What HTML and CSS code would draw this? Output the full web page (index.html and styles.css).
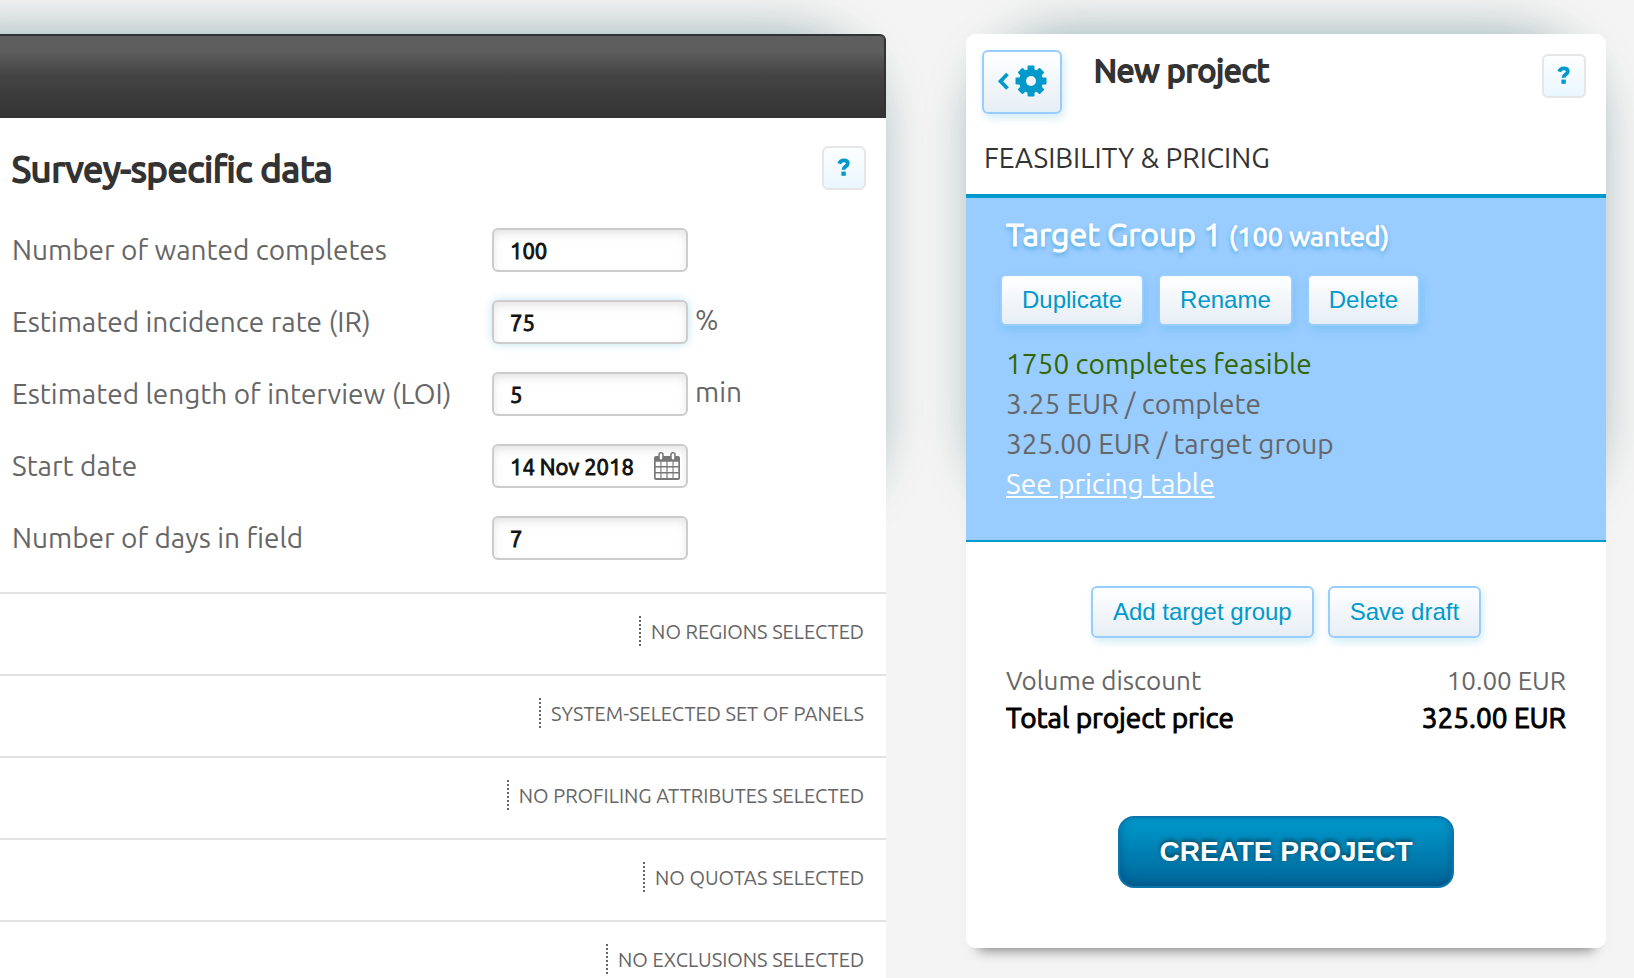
FILE: index.html
```html
<!DOCTYPE html>
<html lang="en">
<head>
<meta charset="utf-8">
<title>New project</title>
<link rel="stylesheet" href="styles.css">
</head>
<body>
<div class="page">
  <main class="card survey">
    <div class="topbar"></div>
    <form class="data">
      <div class="data-head">
        <h1 class="data-title">Survey-specific data</h1>
        <button class="help" type="button" aria-label="Help"><svg class="help-icon" viewBox="0 0 14 18" aria-hidden="true"><path d="M2.200 5.600C2.900 3.700 4.300 2.300 6.700 2.300c2.500 0 4.100 1.200 4.100 3.200 0 3-4.300 2.800-4.300 6.300" fill="none" stroke="currentColor" stroke-width="3.800"/><path d="M4.400 13.600h4.400v4.200H4.400z" fill="currentColor"/></svg></button>
      </div>
      <div class="field"><label class="label" for="wanted">Number of wanted completes</label><input class="input" id="wanted" type="text" value="100"></div>
      <div class="field"><label class="label" for="rate">Estimated incidence rate (IR)</label><input class="input input-active" id="rate" type="text" value="75"><span class="unit">%</span></div>
      <div class="field"><label class="label" for="loi">Estimated length of interview (LOI)</label><input class="input" id="loi" type="text" value="5"><span class="unit">min</span></div>
      <div class="field"><label class="label" for="start">Start date</label>
        <span class="date"><input class="input" id="start" type="text" value="14 Nov 2018"><svg class="calendar" viewBox="0 0 26 28" aria-hidden="true"><rect x="0" y="4" width="26" height="24" rx="2" fill="#777"/><g fill="#fff"><path d="M1.700 9.700h4.700v4.300H1.700zM7.500 9.700h4.900v4.300H7.500zM13.600 9.700h4.900v4.300h-4.900zM19.600 9.700h4.700v4.300h-4.700zM1.700 15.500h4.700v4.500H1.700zM7.500 15.500h4.900v4.500H7.500zM13.600 15.500h4.900v4.500h-4.900zM19.600 15.500h4.700v4.500h-4.700zM1.700 21.500h4.700v4.500H1.700zM7.500 21.500h4.900v4.500H7.500zM13.600 21.500h4.900v4.500h-4.900zM19.600 21.500h4.700v4.500h-4.700z"/></g><g fill="#fff" stroke="#777" stroke-width="1.500"><rect x="5" y="0.800" width="4" height="7.500" rx="2"/><rect x="17" y="0.800" width="4" height="7.500" rx="2"/></g></svg></span></div>
      <div class="field"><label class="label" for="days">Number of days in field</label><input class="input" id="days" type="text" value="7"></div>
    </form>
    <div class="row"><span class="status">NO REGIONS SELECTED</span></div>
    <div class="row"><span class="status">SYSTEM-SELECTED SET OF PANELS</span></div>
    <div class="row"><span class="status">NO PROFILING ATTRIBUTES SELECTED</span></div>
    <div class="row"><span class="status">NO QUOTAS SELECTED</span></div>
    <div class="row"><span class="status">NO EXCLUSIONS SELECTED</span></div>
  </main>
  <aside class="card project">
    <header class="project-head">
      <button class="button settings" type="button" aria-label="Back to settings"><svg class="settings-icon" viewBox="0 0 50 32" aria-hidden="true"><path d="M10.500 9 3.500 16.200l7 7.300" fill="none" stroke="currentColor" stroke-width="3.800"/><g fill="currentColor"><rect x="30.500" y="0.500" width="7" height="31" rx="1"/><rect x="18.500" y="12.500" width="31" height="7" rx="1"/><g transform="rotate(45 34 16)"><rect x="30.500" y="0.500" width="7" height="31" rx="1"/><rect x="18.500" y="12.500" width="31" height="7" rx="1"/></g></g><circle cx="34" cy="16" r="8.500" fill="none" stroke="currentColor" stroke-width="7"/><circle cx="34" cy="16" r="5" fill="#f3f7fa"/></svg></button>
      <h2 class="project-title">New project</h2>
      <button class="help" type="button" aria-label="Help"><svg class="help-icon" viewBox="0 0 14 18" aria-hidden="true"><path d="M2.200 5.600C2.900 3.700 4.300 2.300 6.700 2.300c2.500 0 4.100 1.200 4.100 3.200 0 3-4.300 2.800-4.300 6.300" fill="none" stroke="currentColor" stroke-width="3.800"/><path d="M4.400 13.600h4.400v4.200H4.400z" fill="currentColor"/></svg></button>
    </header>
    <h3 class="section">FEASIBILITY &amp; PRICING</h3>
    <section class="group">
      <h4 class="group-title">Target Group 1 <span class="group-count">(100 wanted)</span></h4>
      <div class="group-actions">
        <button class="button" type="button">Duplicate</button>
        <button class="button" type="button">Rename</button>
        <button class="button" type="button">Delete</button>
      </div>
      <p class="line feasible">1750 completes feasible</p>
      <p class="line">3.25 EUR / complete</p>
      <p class="line">325.00 EUR / target group</p>
      <p class="line"><a class="link" href="#">See pricing table</a></p>
    </section>
    <div class="project-actions">
      <button class="button" type="button">Add target group</button>
      <button class="button" type="button">Save draft</button>
    </div>
    <dl class="totals">
      <div class="total"><dt>Volume discount</dt><dd>10.00 EUR</dd></div>
      <div class="total total-main"><dt>Total project price</dt><dd>325.00 EUR</dd></div>
    </dl>
    <button class="create" type="button">CREATE PROJECT</button>
  </aside>
</div>
</body>
</html>
```

FILE: styles.css
```css
* { box-sizing: border-box; }

body {
  margin: 0;
  background: #f4f4f4;
  color: #666;
  font-family: Ubuntu, "Noto Sans", sans-serif;
  font-size: 28px;
  line-height: 40px;
}

h1, h2, h3, h4, p, dl, dd { margin: 0; }

.page {
  display: grid;
  grid-template-columns: 443fr 320fr;
  gap: 80px;
  align-items: start;
  height: 100vh;
  padding: 34px 28px 0 0;
  overflow: hidden;
}

.card {
  position: relative;
  z-index: 0;
  background: #fff;
}

/* soft glow around the upper half of each card */
.card::before {
  content: "";
  position: absolute;
  z-index: -2;
  inset: 0 10px auto;
  height: 480px;
  border-radius: 90px;
  box-shadow: 0 0 50px rgba(0, 72, 68, .36), 0 0 80px rgba(0, 0, 0, .03);
}

.card::after {
  content: "";
  position: absolute;
  z-index: -1;
  inset: 0;
  border-radius: inherit;
  background: #fff;
}

/* heavier weight drawn as an outline around the regular letters */
.data-title, .project-title, .group-title, .total-main, .input {
  font-weight: 400;
  -webkit-text-stroke: 1px currentColor;
}

.data-title, .project-title { -webkit-text-stroke-width: 2px; }

/* left card */
.survey { border-radius: 0 6px 0 0; }
.survey::before { left: -120px; }

.topbar {
  height: 84px;
  border-top: 2px solid #2f3333;
  border-right: 2px solid #333;
  border-radius: 0 6px 0 0;
  background: linear-gradient(#5e5e5e 18%, #444 48%, #333);
}

.data { padding: 28px 20px 18px 12px; }

.data-head {
  display: flex;
  justify-content: space-between;
  height: 68px;
}

.data-title {
  color: #333;
  font-size: 36px;
  line-height: 46px;
}

.field {
  display: flex;
  align-items: center;
  height: 72px;
}

.label { width: 480px; }

.input {
  width: 196px;
  height: 44px;
  padding: 0 16px;
  border: 2px solid #ccc;
  border-radius: 6px;
  background: #fff;
  box-shadow: inset 0 4px 8px rgba(0, 0, 0, .1);
  color: #111;
  font-family: inherit;
  font-size: 22px;
}

.input-active { box-shadow: inset 0 4px 8px rgba(0, 0, 0, .1), 0 0 10px rgba(0, 153, 204, .25); }

.unit { padding: 0 0 4px 7px; }

.date { position: relative; display: flex; }

.calendar {
  position: absolute;
  top: 8px;
  right: 8px;
  width: 26px;
  height: 28px;
}

.row {
  display: flex;
  justify-content: flex-end;
  height: 82px;
  padding: 22px 22px 0 0;
  border-top: 2px solid #e2e2e2;
}

.status {
  height: 30px;
  padding-left: 10px;
  border-left: 2px dotted #666;
  font-size: 20px;
  line-height: 32px;
}

.help {
  flex: none;
  display: grid;
  place-items: center;
  width: 44px;
  height: 44px;
  padding: 0 0 2px;
  border: 2px solid #e6e6e6;
  border-radius: 6px;
  background: linear-gradient(#fcfeff, #eaf6ff);
  color: #09c;
}

.help-icon { width: 14px; height: 18px; }

/* right card */
.project {
  display: flex;
  flex-direction: column;
  padding-bottom: 60px;
  border-radius: 10px;
  box-shadow: 0 14px 12px -12px rgba(0, 0, 0, .5);
}

.project-head {
  display: flex;
  align-items: flex-start;
  padding: 16px 20px 0 16px;
}

.project-head .help { margin-top: 4px; }

.project-title {
  flex: 1;
  padding-left: 32px;
  color: #333;
  font-size: 32px;
}

.section {
  padding: 24px 18px 16px;
  color: #333;
  font-size: 28px;
  font-weight: 400;
}

.button {
  height: 52px;
  padding: 0 20px;
  border: 2px solid #9cf;
  border-radius: 6px;
  background: linear-gradient(#fff, #e6eef5);
  box-shadow: 2px 4px 8px rgba(0, 153, 204, .18);
  color: #09c;
  font: 24px "Liberation Sans", Arial, sans-serif;
}

.settings {
  width: 80px;
  height: 64px;
  padding: 0 0 2px 13px;
}

.settings-icon {
  display: block;
  width: 50px;
  height: 32px;
}

.group {
  padding: 16px 40px 36px;
  border-top: 4px solid #09c;
  border-bottom: 2px solid #09c;
  background: #9cf;
}

.group-title {
  color: #fff;
  font-size: 32px;
  line-height: 40px;
  text-shadow: 0 3px 4px rgba(0, 136, 187, .6);
}

.group-count { font-size: 27px; }

.group-actions {
  display: flex;
  gap: 14px;
  margin: 18px -6px;
}

.feasible { color: #360; }

.link { color: #fff; }

.project-actions {
  display: flex;
  justify-content: center;
  gap: 14px;
  padding: 44px 0 24px;
}

.totals { padding: 0 40px; }

.total {
  display: flex;
  justify-content: space-between;
  font-size: 26px;
  line-height: 38px;
}

.total-main {
  color: #000;
  font-size: 28px;
  line-height: 36px;
}

.create {
  align-self: center;
  height: 72px;
  margin-top: 80px;
  padding: 0 39px;
  border: 2px solid #0b76ae;
  border-radius: 16px;
  background: linear-gradient(#09c, #069);
  box-shadow: inset 0 -2px 8px rgba(0, 51, 102, .4);
  color: #fff;
  font: bold 28px "Liberation Sans", Arial, sans-serif;
  text-shadow: 0 -2px 4px rgba(0, 0, 0, .5);
}
```
